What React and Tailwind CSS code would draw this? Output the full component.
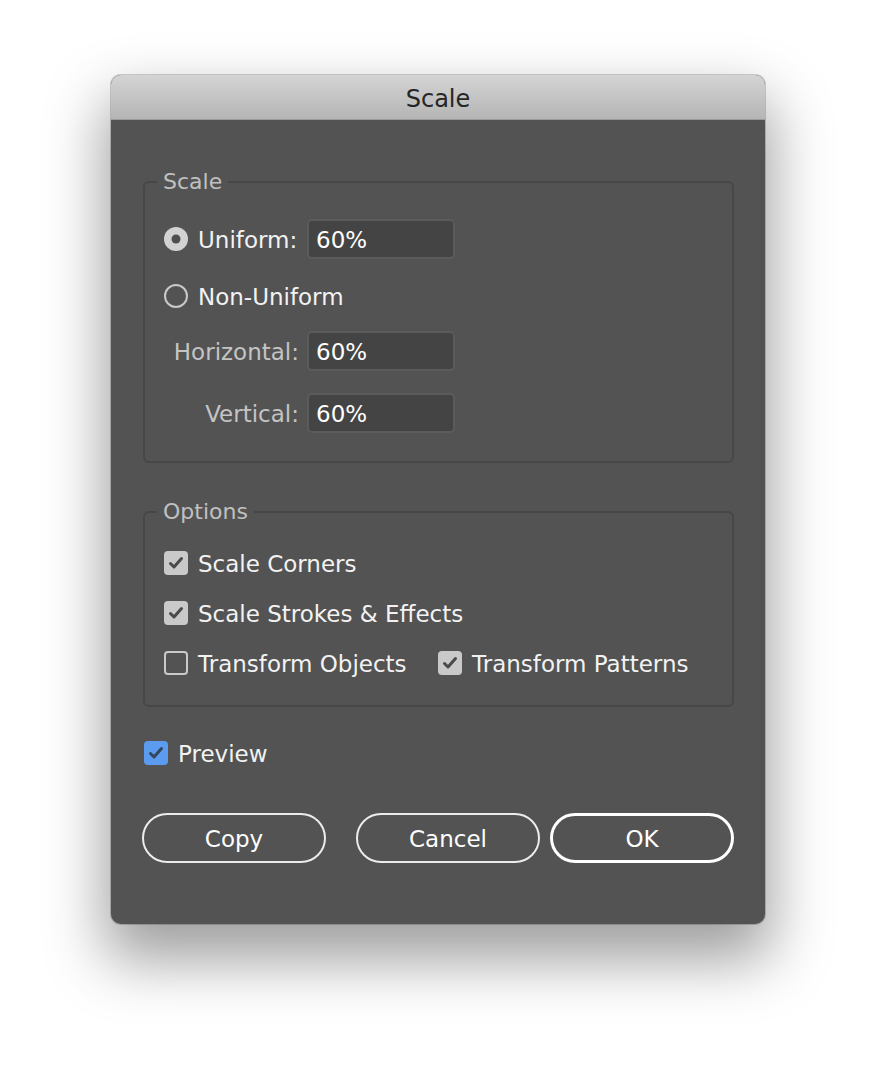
import React, { useState } from "react";

const font = { fontFamily: '"DejaVu Sans", "Liberation Sans", sans-serif' };

function Radio({ checked }) {
  return checked ? (
    <svg width="24" height="24" viewBox="0 0 24 24" className="shrink-0">
      <circle cx="12" cy="12" r="12" fill="#d2d2d2" />
      <circle cx="12" cy="12" r="4.5" fill="#4f4f4f" />
    </svg>
  ) : (
    <svg width="24" height="24" viewBox="0 0 24 24" className="shrink-0">
      <circle cx="12" cy="12" r="11" fill="none" stroke="#c9c9c9" strokeWidth="2" />
    </svg>
  );
}

function Check({ checked, blue }) {
  if (!checked) {
    return <div className="w-[24px] h-[24px] shrink-0 rounded-[4px] border-2 border-[#c9c9c9]" />;
  }
  return (
    <div
      className={`w-[24px] h-[24px] shrink-0 rounded-[4px] flex items-center justify-center ${
        blue ? "bg-[#5b9cf1]" : "bg-[#c9c9c9]"
      }`}
    >
      <svg width="24" height="24" viewBox="0 0 24 24">
        <path
          d="M6.5 12.5 L10 16 L17.5 7.5"
          fill="none"
          stroke={blue ? "#36465c" : "#4a4a4a"}
          strokeWidth="3"
          strokeLinecap="round"
          strokeLinejoin="round"
        />
      </svg>
    </div>
  );
}

function Field({ value }) {
  return (
    <div className="w-[148px] h-[40px] rounded-[5px] bg-[#444444] border-2 border-[#5b5b5b] flex items-center px-[7px] pt-[2px] text-[23px] text-white">
      {value}
    </div>
  );
}

function Group({ title, children, className }) {
  return (
    <div className={`relative border-2 border-[#474747] rounded-[6px] ${className}`}>
      {/* legend sits on the border line */}
      <span className="absolute -top-[16px] left-[12px] px-[6px] bg-[#535353] text-[22px] leading-[30px] text-[#c0c0c0]">
        {title}
      </span>
      {children}
    </div>
  );
}

function OptionRow({ checked, label, className }) {
  return (
    <div className={`flex items-center gap-[10px] h-[30px] ${className || ""}`}>
      <Check checked={checked} />
      <span className="text-[23px] text-[#f2f2f2] leading-[28px] pt-[2px] whitespace-nowrap">{label}</span>
    </div>
  );
}

export default function App() {
  const [uniform] = useState(true);

  return (
    <div className="w-[876px] h-[1072px] bg-white pt-[75px] pl-[111px]" style={font}>
      <div className="w-[654px] h-[849px] rounded-[10px] overflow-hidden bg-[#535353] shadow-[0_30px_60px_6px_rgba(0,0,0,0.38),0_0_0_1px_rgba(0,0,0,0.18)] flex flex-col">
        {/* Title bar */}
        <div className="h-[45px] shrink-0 bg-gradient-to-b from-[#d4d4d4] to-[#b5b5b5] border-b border-[#9a9a9a] flex items-center justify-center pt-[4px]">
          <span className="text-[24px] text-[#262626]">Scale</span>
        </div>

        <div className="flex-1 pl-[32px] pr-[31px] pt-[61px]">
          {/* Scale group */}
          <Group title="Scale" className="pt-[36px] pb-[28px] pl-[19px]">
            <div className="flex items-center h-[40px]">
              <div className="w-[143px] flex items-center gap-[10px]">
                <Radio checked={uniform} />
                <span className="text-[23px] text-[#f2f2f2] pt-[2px]">Uniform:</span>
              </div>
              <Field value="60%" />
            </div>
            <div className="flex items-center h-[40px] mt-[17px]">
              <div className="flex items-center gap-[10px]">
                <Radio checked={!uniform} />
                <span className="text-[23px] text-[#f2f2f2] pt-[2px]">Non-Uniform</span>
              </div>
            </div>
            <div className="flex items-center h-[40px] mt-[15px]">
              <div className="w-[143px] pr-[8px] pt-[2px] text-right text-[23px] text-[#c4c4c4]">Horizontal:</div>
              <Field value="60%" />
            </div>
            <div className="flex items-center h-[40px] mt-[22px]">
              <div className="w-[143px] pr-[8px] pt-[2px] text-right text-[23px] text-[#c4c4c4]">Vertical:</div>
              <Field value="60%" />
            </div>
          </Group>

          {/* Options group */}
          <Group title="Options" className="mt-[48px] pt-[35px] pb-[27px] pl-[19px]">
            <div className="flex flex-col gap-[20px]">
              <OptionRow checked label="Scale Corners" />
              <OptionRow checked label="Scale Strokes & Effects" />
              <div className="flex items-center">
                <OptionRow checked={false} label="Transform Objects" className="w-[274px]" />
                <OptionRow checked label="Transform Patterns" />
              </div>
            </div>
          </Group>

          {/* Preview */}
          <OptionRowBlue />

          {/* Buttons */}
          <div className="flex mt-[45px] -ml-[1px]">
            <button className="w-[184px] h-[50px] rounded-full border-2 border-[#ececec] text-[23px] text-white pt-[2px]">
              Copy
            </button>
            <button className="w-[184px] h-[50px] ml-[30px] rounded-full border-2 border-[#ececec] text-[23px] text-white pt-[2px]">
              Cancel
            </button>
            <button className="w-[184px] h-[50px] ml-[10px] rounded-full border-[3.5px] border-white text-[23px] text-white pt-[2px]">
              OK
            </button>
          </div>
        </div>
      </div>
    </div>
  );
}

function OptionRowBlue() {
  return (
    <div className="flex items-center gap-[10px] h-[30px] mt-[31px] pl-[1px]">
      <Check checked blue />
      <span className="text-[23px] text-[#f2f2f2] leading-[28px] pt-[2px]">Preview</span>
    </div>
  );
}
